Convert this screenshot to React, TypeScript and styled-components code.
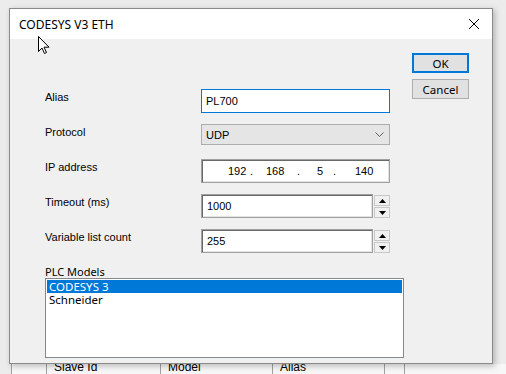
import React from 'react';
import styled, { createGlobalStyle } from 'styled-components';

const GlobalStyle = createGlobalStyle`
  html, body {
    margin: 0;
    padding: 0;
    width: 506px;
    height: 374px;
    overflow: hidden;
    background: #e4e4e4;
  }
  * { box-sizing: border-box; }
`;

const Screen = styled.div`
  position: relative;
  width: 506px;
  height: 374px;
  overflow: hidden;
  background: #ececec;
  padding-top: 8px;
  font-family: "Liberation Sans", Arial, sans-serif;
  font-size: 11px;
  color: #000;
`;

const Dialog = styled.div`
  margin-left: 9px;
  width: 484px;
  height: 356px;
  border: 1px solid #8a8a8a;
  background: #f0f0f0;
  box-shadow: 2px 2px 6px rgba(0, 0, 0, 0.25);
  display: flex;
  flex-direction: column;
  position: relative;
  z-index: 1;
`;

const TitleBar = styled.div`
  height: 30px;
  background: #fff;
  display: flex;
  align-items: center;
  justify-content: space-between;
  padding: 0 9px 0 9px;
  font-family: "Noto Sans", "Open Sans", sans-serif;
  font-size: 12px;
`;

const CloseIcon = styled.svg`
  width: 12px;
  height: 12px;
  margin-right: 3px;
`;

const Body = styled.div`
  flex: 1;
  display: flex;
  padding-left: 35px;
`;

const FormColumn = styled.div`
  width: 359px;
  padding-top: 50px;
  display: flex;
  flex-direction: column;
`;

const Row = styled.div`
  height: 35px;
  display: flex;
  align-items: flex-start;
`;

const Label = styled.div`
  width: 156px;
  padding-top: 2px;
  line-height: 13px;
`;

const TextBox = styled.div<{ $focused?: boolean }>`
  width: 189px;
  height: 24px;
  background: #fff;
  border: 1px solid ${({ $focused }) => ($focused ? '#0078d7' : '#7a7a7a')};
  display: flex;
  align-items: center;
  padding-left: 4px;
`;

const Sunken = styled.div<{ $width: number; $pad?: number }>`
  width: ${({ $width }) => $width}px;
  height: 24px;
  background: #fff;
  border: 1px solid #a0a0a0;
  box-shadow: inset 1px 1px 0 #696969, inset -1px -1px 0 #e3e3e3;
  display: flex;
  align-items: center;
  padding-left: ${({ $pad }) => ($pad ?? 5)}px;
`;

const Combo = styled.div`
  width: 189px;
  height: 21px;
  background: #e5e5e5;
  border: 1px solid #adadad;
  display: flex;
  align-items: center;
  justify-content: space-between;
  padding: 0 5px 0 4px;
`;

const IpField = styled.div`
  display: flex;
  align-items: center;
`;

const IpPart = styled.span<{ $w: number }>`
  width: ${({ $w }) => $w}px;
  flex-shrink: 0;
  text-align: left;
`;

const SpinWrap = styled.div`
  display: flex;
`;

const Spinner = styled.div`
  width: 17px;
  height: 24px;
  display: flex;
  flex-direction: column;
  gap: 1px;
  padding: 1px 0 0 1px;
`;

const SpinButton = styled.div`
  flex: 1;
  background: #f0f0f0;
  border: 1px solid #c8c8c8;
  display: flex;
  align-items: center;
  justify-content: center;
`;

const GroupLabel = styled.div`
  height: 14px;
  padding-top: 1px;
  font-family: "Noto Sans", "Open Sans", sans-serif;
  font-size: 11px;
  line-height: 13px;
`;

const ListBox = styled.div`
  width: 359px;
  height: 80px;
  background: #fff;
  border: 1px solid #828790;
  padding: 1px;
  font-family: "Noto Sans", "Open Sans", sans-serif;
  font-size: 11.5px;
`;

const ListItem = styled.div<{ $selected?: boolean }>`
  height: 13px;
  line-height: 13px;
  padding-left: 2px;
  background: ${({ $selected }) => ($selected ? '#0078d7' : 'transparent')};
  color: ${({ $selected }) => ($selected ? '#fff' : '#000')};
`;

const ButtonColumn = styled.div`
  padding-top: 14px;
  margin-left: 8px;
  display: flex;
  flex-direction: column;
  gap: 6px;
`;

const Button = styled.div<{ $default?: boolean }>`
  width: 57px;
  height: 20px;
  background: #e1e1e1;
  border: ${({ $default }) => ($default ? '2px solid #0078d7' : '1px solid #adadad')};
  display: flex;
  align-items: center;
  justify-content: center;
  font-family: "Noto Sans", "Open Sans", sans-serif;
  font-size: 11.5px;
`;

const HeaderRow = styled.div`
  height: 10px;
  overflow: hidden;
  display: flex;
  align-items: flex-end;
  padding-left: 11px;
`;

const HeaderCell = styled.div<{ $w: number }>`
  width: ${({ $w }) => $w}px;
  height: 16px;
  flex-shrink: 0;
  border-left: 1px solid #a0a0a0;
  background: #f7f7f7;
  padding-left: 7px;
  line-height: 14px;
  font-size: 12px;
  display: flex;
  align-items: flex-end;
`;

const Cursor = styled.svg`
  position: absolute;
  left: 38px;
  top: 36px;
  width: 13px;
  height: 19px;
  z-index: 2;
`;

const Arrow = ({ up }: { up?: boolean }) => (
  <svg width="7" height="4" viewBox="0 0 7 4">
    {up ? <polygon points="0,4 7,4 3.5,0" fill="#000" /> : <polygon points="0,0 7,0 3.5,4" fill="#000" />}
  </svg>
);

const ipLayout: [string, number][] = [
  ['', 26],
  ['192', 22],
  ['.', 16],
  ['168', 31],
  ['.', 20],
  ['5', 16],
  ['.', 22],
  ['140', 30],
];

export default function App() {
  return (
    <Screen>
      <GlobalStyle />
      <Dialog>
        <TitleBar>
          <span>CODESYS V3 ETH</span>
          <CloseIcon viewBox="0 0 12 12">
            <path d="M1 1 L11 11 M11 1 L1 11" stroke="#000" strokeWidth="1" />
          </CloseIcon>
        </TitleBar>
        <Body>
          <FormColumn>
            <Row>
              <Label>Alias</Label>
              <TextBox $focused>PL700</TextBox>
            </Row>
            <Row>
              <Label>Protocol</Label>
              <Combo>
                <span>UDP</span>
                <svg width="9" height="5" viewBox="0 0 9 5">
                  <path d="M0.5 0.5 L4.5 4.5 L8.5 0.5" stroke="#606060" fill="none" />
                </svg>
              </Combo>
            </Row>
            <Row>
              <Label>IP address</Label>
              <Sunken $width={189} $pad={0}>
                <IpField>
                  {ipLayout.map(([text, w], i) => (
                    <IpPart key={i} $w={w}>{text}</IpPart>
                  ))}
                </IpField>
              </Sunken>
            </Row>
            <Row>
              <Label>Timeout (ms)</Label>
              <SpinWrap>
                <Sunken $width={172}>1000</Sunken>
                <Spinner>
                  <SpinButton><Arrow up /></SpinButton>
                  <SpinButton><Arrow /></SpinButton>
                </Spinner>
              </SpinWrap>
            </Row>
            <Row>
              <Label>Variable list count</Label>
              <SpinWrap>
                <Sunken $width={172}>255</Sunken>
                <Spinner>
                  <SpinButton><Arrow up /></SpinButton>
                  <SpinButton><Arrow /></SpinButton>
                </Spinner>
              </SpinWrap>
            </Row>
            <GroupLabel>PLC Models</GroupLabel>
            <ListBox>
              <ListItem $selected>CODESYS 3</ListItem>
              <ListItem>Schneider</ListItem>
            </ListBox>
          </FormColumn>
          <ButtonColumn>
            <Button $default>OK</Button>
            <Button>Cancel</Button>
          </ButtonColumn>
        </Body>
      </Dialog>
      <HeaderRow>
        <HeaderCell $w={35} />
        <HeaderCell $w={114}>Slave Id</HeaderCell>
        <HeaderCell $w={112}>Model</HeaderCell>
        <HeaderCell $w={112}>Alias</HeaderCell>
        <HeaderCell $w={20} />
        <HeaderCell $w={102} />
      </HeaderRow>
      <Cursor viewBox="0 0 13 19">
        <path d="M0.5 0.5 L0.5 15.5 L4 12 L6.5 17.5 L8.5 16.5 L6 11.2 L11 11.2 Z" fill="#fff" stroke="#000" strokeWidth="1" strokeLinejoin="round" />
      </Cursor>
    </Screen>
  );
}
